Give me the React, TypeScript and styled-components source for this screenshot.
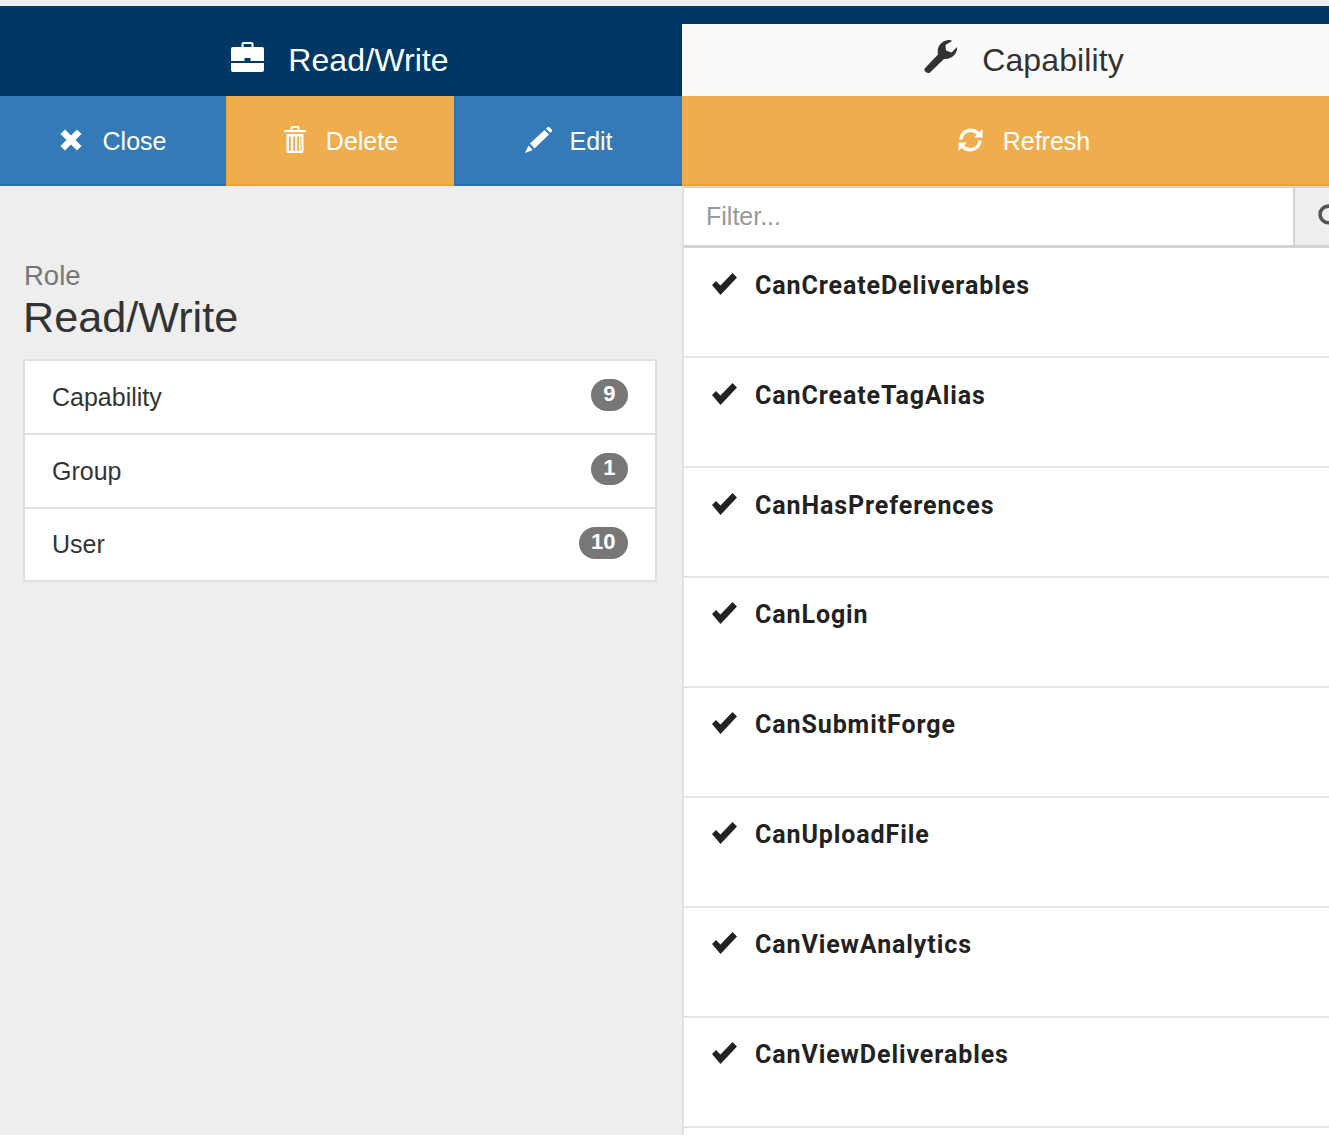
import React from "react";
import styled, { createGlobalStyle } from "styled-components";

const GlobalStyle = createGlobalStyle`
  html, body {
    margin: 0;
    padding: 0;
    height: 100%;
    overflow: hidden;
    background: #eeeeee;
  }
  * {
    box-sizing: border-box;
  }
`;

const Page = styled.div`
  width: 1366px;
  height: 1135px;
  padding-top: 6px;
  display: grid;
  grid-template-columns: 682px 684px;
  grid-template-rows: 90px 90px 1fr;
  font-family: "Liberation Sans", Arial, sans-serif;
  color: #333;
  overflow: hidden;
`;

const Tab = styled.div<{ $active?: boolean }>`
  display: flex;
  align-items: center;
  justify-content: center;
  gap: ${(p) => (p.$active ? 25 : 24)}px;
  padding: 18px ${(p) => (p.$active ? 0 : 2)}px 0 0;
  font-size: 32px;
  letter-spacing: 0.1px;
  background: ${(p) =>
    p.$active ? "linear-gradient(#003865 18px, #fafafa 18px)" : "#003865"};
  color: ${(p) => (p.$active ? "#333" : "#fff")};

  svg {
    margin-top: -6px;
  }
`;

const ActionBar = styled.div<{ $split?: boolean }>`
  display: grid;
  grid-template-columns: ${(p) => (p.$split ? "226px 228px 228px" : "1fr")};
`;

const ActionButton = styled.button<{ $warn?: boolean; $gap?: number }>`
  display: flex;
  align-items: center;
  justify-content: center;
  gap: ${(p) => p.$gap ?? 20}px;
  border: none;
  border-bottom: 2px solid ${(p) => (p.$warn ? "#eea236" : "#2e6da4")};
  border-left: 1px solid ${(p) => (p.$warn ? "#eea236" : "#2e6da4")};
  background: ${(p) => (p.$warn ? "#f0ad4e" : "#337ab7")};
  color: #fff;
  font-family: inherit;
  font-size: 25px;
  padding: 2px 0 0 1px;

  &:first-child {
    border-left: none;
    padding-left: 0;
  }

  svg {
    margin-top: -3px;
  }
`;

const RolePanel = styled.div`
  padding: 75px 25px 0 23px;
`;

const RoleLabel = styled.div`
  font-size: 27.5px;
  line-height: 29px;
  padding-left: 1px;
  color: #777;
`;

const RoleName = styled.h1`
  margin: 0 0 15px;
  font-size: 43.2px;
  font-weight: 400;
  line-height: 54px;
`;

const CountList = styled.div`
  border: 2px solid #e0e0e0;
  background: #fff;
`;

const CountRow = styled.div`
  height: 74px;
  padding: 0 27px;
  display: flex;
  align-items: center;
  justify-content: space-between;
  font-size: 25px;
  &:not(:last-child) {
    border-bottom: 2px solid #e0e0e0;
  }
  &:last-child {
    height: 71px;
  }
`;

const Badge = styled.span`
  min-width: 37px;
  height: 32px;
  padding: 0 12.5px;
  margin-top: -4px;
  border-radius: 16px;
  background: #777;
  color: #fff;
  font-size: 22px;
  font-weight: 700;
  line-height: 30px;
  text-align: center;
`;

const CapabilityPanel = styled.div`
  border-left: 2px solid #e0e0e0;
  background: #fff;
  min-height: 0;
`;

const FilterBar = styled.div`
  height: 62px;
  display: flex;
  border-top: 2px solid #d4d4d4;
  border-bottom: 3px solid #d4d4d4;
`;

const FilterInput = styled.input`
  flex: 1;
  min-width: 0;
  border: none;
  outline: none;
  padding: 0 22px;
  font-family: inherit;
  font-size: 25px;
  color: #333;
  &::placeholder {
    color: #999;
    opacity: 1;
  }
`;

const FilterAddon = styled.div`
  width: 73px;
  display: flex;
  align-items: center;
  justify-content: center;
  background: #eee;
  border-left: 2px solid #d4d4d4;
  color: #555;
`;

const CapabilityRow = styled.div`
  height: 110px;
  padding: 25px 0 0 28px;
  display: flex;
  align-items: flex-start;
  gap: 18px;
  border-bottom: 2px solid #e5e5e5;
  font-family: Roboto, "Liberation Sans", sans-serif;
  font-size: 25px;
  font-weight: 700;
  line-height: 26px;
  letter-spacing: 0.9px;
  color: #222;

  &:nth-child(n + 5) {
    padding-top: 24px;
  }
`;

const BriefcaseIcon = () => (
  <svg width="33" height="30" viewBox="0 0 33 30" fill="currentColor">
    <path d="M10.500 5.500V2a2 2 0 0 1 2-2h8a2 2 0 0 1 2 2v3.500h-2V2h-8v3.500z" />
    <path d="M2 5h29a2 2 0 0 1 2 2v12H19.500v-3h-6v3H0V7a2 2 0 0 1 2-2z" />
    <path d="M0 21h33v7a2 2 0 0 1-2 2H2a2 2 0 0 1-2-2z" />
  </svg>
);

const WrenchIcon = () => (
  <svg width="33" height="34" viewBox="0 0 33 34" fill="currentColor">
    <path d="M.7 28.500 14 14.500C12.500 8 16 1.500 24 0c2-.2 3 .3 4 1l-6.500 4 .5 5.500 5.500 2L33 7c.5 6-4 12.500-13 12L6 32.500c-2 2-7-1.500-5.300-4z" />
  </svg>
);

const CloseIcon = () => (
  <svg width="22" height="22" viewBox="0 0 22 22" fill="currentColor">
    <path d="M5 0.500 11 6.500 17 .5 21.500 5 15.500 11 21.500 17 17 21.500 11 15.500 5 21.500 .5 17 6.500 11 .5 5z" />
  </svg>
);

const TrashIcon = () => (
  <svg width="22" height="27" viewBox="0 0 22 27" fill="currentColor">
    <path d="M6.500 4V1.500A1.500 1.500 0 0 1 8 0h6a1.500 1.500 0 0 1 1.500 1.500V4h-2V2h-5v2z" />
    <rect x="0" y="4" width="22" height="2.200" />
    <path
      fillRule="evenodd"
      d="M2.500 8h17v17.500a1.500 1.500 0 0 1-1.500 1.500H4a1.500 1.500 0 0 1-1.500-1.500zM5 10.500V25h1.800V10.500zm4.200 0V25H11V10.500zm4 0V25H15V10.500zM16.500 10.500V25H17.500V10.500z"
    />
  </svg>
);

const PencilIcon = () => (
  <svg width="27" height="26" viewBox="0 0 27 26" fill="currentColor">
    <path d="M5 16.500 19.500 3 24 7.500 9.500 21.500z" />
    <path d="M3.500 18.500 7.800 23 0 26z" />
    <path d="M21 1.500 22.500.3a1.500 1.500 0 0 1 2 0l2.200 2.200a1.500 1.500 0 0 1 0 2L25.500 6z" />
  </svg>
);

const RefreshIcon = () => (
  <svg width="25" height="26" viewBox="0 0 25 26" fill="none">
    <path d="M3 12.500A9.800 9.800 0 0 1 20 6.500" stroke="currentColor" strokeWidth="3.400" />
    <path d="M24.500 2V10.500H16z" fill="currentColor" />
    <path d="M22 13.500A9.800 9.800 0 0 1 5 19.500" stroke="currentColor" strokeWidth="3.400" />
    <path d="M.5 24V15.500H9z" fill="currentColor" />
  </svg>
);

const SearchIcon = () => (
  <svg width="26" height="26" viewBox="0 0 25 25" fill="none" stroke="currentColor" strokeWidth="3.500">
    <circle cx="10" cy="10" r="8" />
    <path d="M16 16 23 23" strokeWidth="4.500" />
  </svg>
);

const CheckIcon = () => (
  <svg width="25" height="22" viewBox="0 0 25 22" fill="currentColor">
    <path d="M0 12 4 8 8.500 12.500 20.500 0 25 4.500 8.500 22z" />
  </svg>
);

const counts = [
  { label: "Capability", count: 9 },
  { label: "Group", count: 1 },
  { label: "User", count: 10 },
];

const capabilities = [
  "CanCreateDeliverables",
  "CanCreateTagAlias",
  "CanHasPreferences",
  "CanLogin",
  "CanSubmitForge",
  "CanUploadFile",
  "CanViewAnalytics",
  "CanViewDeliverables",
];

const App: React.FC = () => {
  return (
    <Page>
      <GlobalStyle />
      <Tab>
        <BriefcaseIcon />
        Read/Write
      </Tab>
      <Tab $active>
        <WrenchIcon />
        Capability
      </Tab>
      <ActionBar $split>
        <ActionButton $gap={21}>
          <CloseIcon />
          Close
        </ActionButton>
        <ActionButton $warn>
          <TrashIcon />
          Delete
        </ActionButton>
        <ActionButton $gap={17}>
          <PencilIcon />
          Edit
        </ActionButton>
      </ActionBar>
      <ActionBar>
        <ActionButton $warn>
          <RefreshIcon />
          Refresh
        </ActionButton>
      </ActionBar>
      <RolePanel>
        <RoleLabel>Role</RoleLabel>
        <RoleName>Read/Write</RoleName>
        <CountList>
          {counts.map((c) => (
            <CountRow key={c.label}>
              {c.label}
              <Badge>{c.count}</Badge>
            </CountRow>
          ))}
        </CountList>
      </RolePanel>
      <CapabilityPanel>
        <FilterBar>
          <FilterInput placeholder="Filter..." readOnly />
          <FilterAddon>
            <SearchIcon />
          </FilterAddon>
        </FilterBar>
        {capabilities.map((name) => (
          <CapabilityRow key={name}>
            <CheckIcon />
            {name}
          </CapabilityRow>
        ))}
      </CapabilityPanel>
    </Page>
  );
};

export default App;
